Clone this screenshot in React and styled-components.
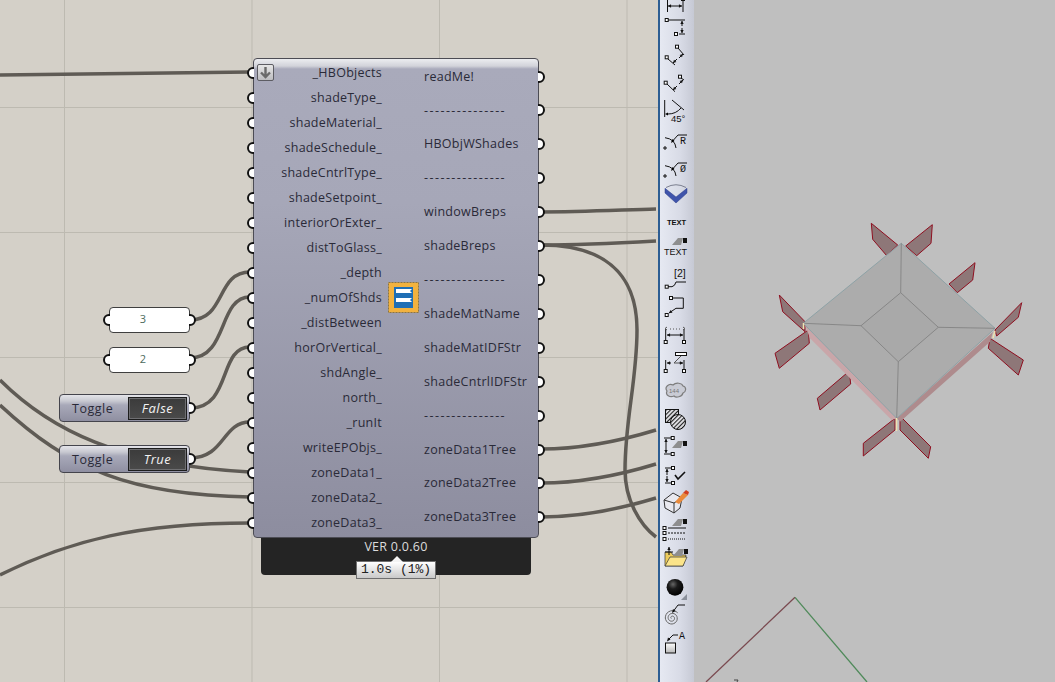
import React from 'react'
import styled, { createGlobalStyle } from 'styled-components'

const GlobalStyle = createGlobalStyle`
    html, body {
        margin: 0;
        padding: 0;
        overflow: hidden;
        background: #d4d0c8;
    }
`

const Page = styled.div`
    display: flex;
    width: 1055px;
    height: 682px;
    overflow: hidden;
    font-family: "Open Sans", "Liberation Sans", sans-serif;
`

const Canvas = styled.div`
    position: relative;
    flex: 0 0 658px;
    height: 100%;
    overflow: hidden;
    background-color: #d4d0c8;
    background-image:
        linear-gradient(to right, #bdbab1 1px, transparent 1px),
        linear-gradient(to bottom, #bdbab1 1px, transparent 1px);
    background-size: 187.5px 125px;
    background-position: 64px -18px;
`

const Wires = styled.svg`
    position: absolute;
    inset: 0;
    width: 658px;
    height: 682px;
`

const Wire = styled.path`
    fill: none;
    stroke: #5f5b55;
    stroke-width: 3.5;
`

const Node = styled.div`
    position: absolute;
    left: ${props => props.$x}px;
    top: ${props => props.$y}px;
    width: ${props => props.$w}px;
`

const Body = styled.div`
    position: relative;
    display: flex;
    box-sizing: border-box;
    height: 480px;
    border: 1px solid #4c4c54;
    border-radius: 4px;
    background: linear-gradient(to bottom, #ecedf0 0, #d2d3da 7px, #a9aabb 10px, #a6a7b8 30%, #8d8d9f 100%);
    z-index: 1;
`

const Inputs = styled.div`
    flex: 0 0 128px;
    padding-top: 1px;
`

const InputRow = styled.div`
    position: relative;
    height: 25px;
    line-height: 25px;
    font-size: 12.5px;
    letter-spacing: 0.27px;
    text-align: right;
    white-space: nowrap;
    color: #2a2a38;
`

const Outputs = styled.div`
    flex: 1;
    margin-left: 42px;
    padding-top: 0.6px;
`

const OutputRow = styled.div`
    position: relative;
    height: 33.92px;
    line-height: 33.92px;
    font-size: 12.5px;
    letter-spacing: ${props => props.$dash ? '1.45px' : '0.27px'};
    white-space: nowrap;
    color: #2a2a38;
`

// only the part of the round grip that sticks out of the node is drawn
const GripIn = styled.span`
    position: absolute;
    left: -7px;
    top: 50%;
    width: 7px;
    height: 12px;
    margin-top: -6px;
    overflow: hidden;

    &::before {
        content: '';
        position: absolute;
        left: 0;
        top: 0;
        box-sizing: border-box;
        width: 12px;
        height: 12px;
        background: #fff;
        border: 2.5px solid #111;
        border-radius: 50%;
    }
`

const GripOut = styled.span`
    position: absolute;
    left: 100%;
    top: 50%;
    width: 7px;
    height: 12px;
    margin-top: -6px;
    overflow: hidden;

    &::before {
        content: '';
        position: absolute;
        right: 0;
        top: 0;
        box-sizing: border-box;
        width: 12px;
        height: 12px;
        background: #fff;
        border: 2.5px solid #111;
        border-radius: 50%;
    }
`

const CheckBox = styled.div`
    position: absolute;
    left: 3px;
    top: 5px;
    display: flex;
    align-items: center;
    justify-content: center;
    box-sizing: border-box;
    width: 17px;
    height: 17px;
    border: 1px solid #5d5d63;
    border-radius: 2px;
    background: linear-gradient(to bottom, #e6e6e6, #bdbdc0);
`

const NodeIcon = styled.svg`
    position: absolute;
    left: 134px;
    top: 223px;
    width: 31px;
    height: 31px;
`

const Footer = styled.div`
    position: relative;
    height: 37px;
    margin: 0 8px;
    border-radius: 0 0 4px 4px;
    background: #242424;
    color: #dcdcdc;
    font-size: 12.5px;
    letter-spacing: 0.27px;
    line-height: 18px;
    text-align: center;
`

const Tip = styled.div`
    position: absolute;
    left: 95px;
    top: 23px;
    box-sizing: border-box;
    width: 80px;
    height: 18px;
    border: 1px solid #6f6f6f;
    background: linear-gradient(to bottom, #ffffff, #c9c9c9);
    color: #222;
    font-family: "Liberation Mono", monospace;
    font-size: 13px;
    letter-spacing: 0;
    line-height: 15px;
    text-align: center;
    white-space: pre;

    &::before {
        content: '';
        position: absolute;
        left: 34px;
        top: -6px;
        border-left: 6px solid transparent;
        border-right: 6px solid transparent;
        border-bottom: 6px solid #f4f4f4;
    }
`

const NumberPanel = styled.div`
    position: relative;
    box-sizing: border-box;
    height: 26px;
    border: 1px solid #3f3f3f;
    border-radius: 4px;
    background: #fff;
    color: #4d6b5c;
    font-size: 11px;
    line-height: 22px;
    text-align: center;
    padding-right: 13px;
`

const ToggleBox = styled.div`
    position: relative;
    display: flex;
    align-items: center;
    justify-content: space-between;
    box-sizing: border-box;
    height: 28px;
    padding: 0 2px 0 12px;
    border: 1px solid #44444c;
    border-radius: 4px;
    background: linear-gradient(to bottom, #e4e4e9 0, #c8c9d1 6px, #a8a9b9 10px, #8f8fa1 100%);
    color: #2a2a38;
    font-size: 12.5px;
    letter-spacing: 0.5px;
`

const ToggleValue = styled.div`
    box-sizing: border-box;
    width: 59px;
    height: 23px;
    border: 1px solid #1d1d1d;
    outline: 1px solid #6f6f72;
    outline-offset: -2px;
    background: linear-gradient(to bottom, #3b3b3b, #4a4a4a);
    color: #f2f2f2;
    font-size: 13px;
    font-style: italic;
    line-height: 20px;
    text-align: center;
`

const Toolbar = styled.div`
    flex: 0 0 36px;
    display: flex;
    flex-direction: column;
    box-sizing: border-box;
    height: 100%;
    overflow: hidden;
    padding: 0 0 0 2px;
    border-left: 2px solid #2c5d93;
    background: linear-gradient(to right, #e6e9f2, #d8dbe6 60%, #c6c9d4);
`

const ToolStack = styled.div`
    display: flex;
    flex-direction: column;
    margin-top: -15px;
`

const ToolSvg = styled.svg`
    flex: 0 0 28px;
    width: 28px;
    height: 28px;
    display: block;
`

const Viewport = styled.div`
    flex: 1;
    height: 100%;
    background: #bfbfbf;
`

const ViewSvg = styled.svg`
    display: block;
    width: 361px;
    height: 682px;
`

const inputs = ['_HBObjects', 'shadeType_', 'shadeMaterial_', 'shadeSchedule_', 'shadeCntrlType_', 'shadeSetpoint_', 'interiorOrExter_', 'distToGlass_', '_depth', '_numOfShds', '_distBetween', 'horOrVertical_', 'shdAngle_', 'north_', '_runIt', 'writeEPObjs_', 'zoneData1_', 'zoneData2_', 'zoneData3_']
const dashes = '---------------'
const outputs = ['readMe!', dashes, 'HBObjWShades', dashes, 'windowBreps', 'shadeBreps', dashes, 'shadeMatName', 'shadeMatIDFStr', 'shadeCntrlIDFStr', dashes, 'zoneData1Tree', 'zoneData2Tree', 'zoneData3Tree']

const wires = [
    'M0 75 C80 74 170 73 250 72',
    'M190 320 C226 320 216 272 250 272',
    'M190 358 C228 358 218 297 250 297',
    'M190 408 C232 408 218 347 250 347',
    'M190 458 C225 458 222 422 250 422',
    'M0 380 C50 430 120 465 250 472',
    'M0 405 C70 470 130 495 250 497',
    'M0 575 C70 540 140 523 250 523',
    'M541 212 C580 212 620 210 656 209',
    'M541 245 C580 245 620 243 656 241',
    'M541 245 C600 245 637 270 637 330 C637 380 625 420 625 470 C625 500 640 525 656 537',
    'M541 449 C580 449 620 441 656 430',
    'M541 483 C580 483 620 475 656 464',
    'M541 517 C580 517 620 509 656 498',
]

const Sq = ({ x, y }) => <rect x={x - 1.5} y={y - 1.5} width="3" height="3" fill="#fff" stroke="#111" strokeWidth="1" />

const Ln = ({ d, w = 1, c = '#111' }) => <path d={d} fill="none" stroke={c} strokeWidth={w} />

const Txt = ({ x, y, s = 8, w = 400, fam = 'Liberation Sans', children }) => (
    <text x={x} y={y} fontSize={s} fontWeight={w} fontFamily={`"${fam}", sans-serif`} fill="#111">{children}</text>
)

// head drawn at x2,y2
const Arr = ({ x1, y1, x2, y2 }) => {
    const a = Math.atan2(y2 - y1, x2 - x1)
    const p = (o) => `${x2 - 3.5 * Math.cos(a + o)} ${y2 - 3.5 * Math.sin(a + o)}`
    return (
        <>
            <Ln d={`M${x1} ${y1} L${x2} ${y2}`} />
            <path d={`M${x2} ${y2} L${p(0.5)} L${p(-0.5)} Z`} fill="#111" />
        </>
    )
}

const Hand = ({ x, y }) => (
    <>
        <polygon points={`${x} ${y + 7},${x + 6} ${y},${x + 11} ${y},${x + 9} ${y + 7}`} fill="#8e8e8e" />
        <rect x={x + 11} y={y} width="4" height="5" fill="#111" />
    </>
)

const spiral = Array.from({ length: 60 }, (_, i) => {
    const t = i / 59 * Math.PI * 5
    const r = 0.8 + t * 0.44
    return `${(10 + r * Math.cos(t + 2.4)).toFixed(1)} ${(17 + r * Math.sin(t + 2.4)).toFixed(1)}`
}).join(' L')

const tools = [
    <><Ln d="M5.5 15V27M21 15V27" /><Arr x1="8" y1="21" x2="6" y2="21" /><Arr x1="17" y1="21" x2="20" y2="21" /><Ln d="M8 21H17" /><Sq x={21} y={14} /></>,
    <><Sq x={4.7} y={7} /><Ln d="M6 7H23M17 21H23" /><Arr x1="20" y1="13" x2="20" y2="8" /><Arr x1="20" y1="15" x2="20" y2="20" /><Sq x={14} y={21} /></>,
    <><Sq x={15} y={5.7} /><Sq x={4.7} y={16.3} /><Ln d="M16 7L22 14M6 18L13 24" /><Arr x1="15" y1="18" x2="11" y2="22" /><Arr x1="17" y1="17" x2="21" y2="13" /></>,
    <><Sq x={18} y={7.7} /><Sq x={3.7} y={13.7} /><Ln d="M19 9L22 11M5 15L13 22.7" /><Arr x1="15" y1="17" x2="11" y2="21" /><Arr x1="17" y1="15" x2="21" y2="11" /></>,
    <><Ln d="M2.7 3V20M10 3L22 13" /><Ln d="M6 17Q14 17 19 11" /><path d="M3 17l3-1.5v3z" /><Txt x={9} y={25} s={9.5}>45°</Txt></>,
    <><Ln d="M3 12.7Q13 14 14 23M1 23H5M3 21V25" /><Ln d="M10 16.7L16 10H25" /><path d="M9 18l1.5-4 2 2z" /><Txt x={18} y={18.5} s={10} fam="Liberation Mono">R</Txt></>,
    <><Ln d="M3 12.7Q13 14 14 23M1 23H5M3 21V25" /><Ln d="M10 16.7L16 10H25" /><path d="M9 18l1.5-4 2 2z" /><Txt x={18} y={18.5} s={10} fam="Liberation Mono">Ø</Txt></>,
    <><polygon points="3,7.3 3,12 14,22 25,12 25,7.3 14,16" fill="#3f54ab" stroke="#2c3c86" strokeWidth=".5" /><Ln d="M4 6.5Q14 1 24 6.5" c="#7c8090" /></>,
    <Txt x={5} y={16} s={7.5} w={700}>TEXT</Txt>,
    <><Hand x={10} y={1} /><Txt x={2} y={18} s={9}>TEXT</Txt></>,
    <><Txt x={12} y={12} s={10.5}>[2]</Txt><Sq x={4.7} y={21.7} /><Ln d="M6 21.7H10Q13 21 14 17H24" /></>,
    <><Sq x={9} y={5} /><Ln d="M11 5H21.3V15.3H14" /><Arr x1="14" y1="15.3" x2="7" y2="20" /><Sq x={4.7} y={22} /></>,
    <><Sq x={3.7} y={21} /><Sq x={22} y={21} /><Ln d="M3.7 8V19M22 8V19" /><Arr x1="13" y1="14" x2="5" y2="14" /><Arr x1="13" y1="14" x2="21" y2="14" /><Ln d="M5 9L3 7.5L5 6M21 9L23 7.5L21 6" c="#555" /><path d="M8 8H18" stroke="#555" strokeDasharray="1 2" /></>,
    <><rect x="13.5" y="3.5" width="11" height="3" fill="#fff" stroke="#111" /><Sq x={3.7} y={22} /><Sq x={22} y={22} /><Ln d="M3.7 11V20M22 11V20" /><Arr x1="9" y1="14" x2="5" y2="14" /><Arr x1="17" y1="14" x2="21" y2="14" /><Ln d="M19 7L12 14H17" c="#555" /></>,
    <><path d="M5 14C2 10 7 6 11 8C14 5 20 6 21 9C25 10 24 15 21 16C20 20 14 21 12 19C8 21 3 18 5 14Z" fill="#c9cbd4" stroke="#7d7d7d" strokeWidth="1.2" /><text x="7" y="16" fontSize="6" fontFamily='"Liberation Sans", sans-serif' fill="#777">144</text></>,
    <><defs><pattern id="hatch" width="3" height="3" patternUnits="userSpaceOnUse" patternTransform="rotate(45)"><rect width="3" height="3" fill="#e4e4e8" /><rect width="1.1" height="3" fill="#222" /></pattern></defs><rect x="3.5" y="4.5" width="13" height="13" fill="url(#hatch)" stroke="#111" /><circle cx="16" cy="17" r="7.5" fill="url(#hatch)" stroke="#111" /></>,
    <><Sq x={10.7} y={5} /><Sq x={10.7} y={21} /><Ln d="M2 5H9M2 21H9" /><Arr x1="4" y1="13" x2="4" y2="6" /><Arr x1="4" y1="13" x2="4" y2="20" /><Hand x={10} y={8} /></>,
    <><Sq x={11} y={7} /><Sq x={11} y={22} /><Ln d="M3 7H9M3 22H9" /><Arr x1="5" y1="14" x2="5" y2="8" /><Arr x1="5" y1="15" x2="5" y2="21" /><Ln d="M13 14L16 18L23 11" w={1.6} /></>,
    <><polygon points="2,11 11,4 20,9 18,19 12,24 3,19" fill="#e9e9ef" stroke="#333" /><Ln d="M2 11L12 14L20 9M12 14V24" c="#333" /><polygon points="13,13 21,4 26,6 17,15" fill="#ea8a3a" /><polygon points="21,4 26,6 27,3 24,1" fill="#d2401f" /></>,
    <><Hand x={10} y={2} /><Sq x={2.5} y={11} /><Sq x={2.5} y={16} /><Sq x={2.5} y={22} /><Ln d="M6 11H24" /><path d="M6 16H24" stroke="#111" strokeDasharray="2 1" /><path d="M6 22H24" stroke="#111" strokeDasharray="1 1" /></>,
    <><polygon points="3,7 3,21 21,21 24,10 11,10 9,7" fill="#eccb5c" stroke="#333" strokeWidth=".7" /><polygon points="3,21 8,12 25,12 21,21" fill="#fbe48a" stroke="#333" strokeWidth=".7" /><Arr x1="7" y1="10" x2="7" y2="2" /><Ln d="M3 7H11" /><Hand x={11} y={4} /></>,
    <><defs><radialGradient id="ball" cx="38%" cy="32%" r="70%"><stop offset="0" stopColor="#666" /><stop offset=".4" stopColor="#1b1b1b" /><stop offset="1" stopColor="#000" /></radialGradient></defs><circle cx="13" cy="14.3" r="8.4" fill="url(#ball)" /><polygon points="25,21 25,27 19,27" fill="#8a8f9a" /></>,
    <><path d={`M${spiral}`} fill="none" stroke="#666" strokeWidth="1" /><Ln d="M23 4H16L11 10.7" /><path d="M10 12l1-4 2.5 2z" fill="#111" /></>,
    <><defs><linearGradient id="sq" x1="0" y1="0" x2="0" y2="1"><stop offset="0" stopColor="#fff" /><stop offset="1" stopColor="#b8b8b8" /></linearGradient></defs><rect x="3.5" y="14" width="10" height="10" fill="url(#sq)" stroke="#111" /><Ln d="M16 6H11L6 11" /><path d="M5 12.5l1-4 2.5 2z" fill="#111" /><Txt x={17} y={10} s={10} fam="Liberation Mono">A</Txt></>,
]

const shades = [
    '871.3,223.3 872.7,239.3 886.7,255.7 897.7,245',
    '932.3,224.7 931,243.3 916.7,255.7 905.7,246',
    '975,262.7 972.7,280 957.3,292.7 949,284',
    '1021.7,302.7 1018.3,317.3 996.7,336 995,330',
    '990,338.3 1023.3,360 1018.3,375 988.3,348.3',
    '900,416 930.7,446.7 928.3,458.3 900,430',
    '895,418.3 863.3,443.3 863.3,456 895,430',
    '849.3,371 817.3,398.3 820,410 850.7,384',
    '779.3,295 782.7,311.7 805,331.7 805,321.7',
    '808.3,330 809.3,343.3 779.3,368.3 775,353.3',
]

export default function App() {
    return (
        <Page>
            <GlobalStyle />
            <Canvas>
                <Wires viewBox="0 0 658 682">
                    {wires.map((d, i) => <Wire key={i} d={d} />)}
                </Wires>

                <Node $x={109} $y={307} $w={81}>
                    <NumberPanel>3<GripIn /><GripOut /></NumberPanel>
                </Node>
                <Node $x={109} $y={347} $w={81}>
                    <NumberPanel>2<GripIn /><GripOut /></NumberPanel>
                </Node>
                <Node $x={59} $y={394} $w={131}>
                    <ToggleBox>Toggle<ToggleValue>False</ToggleValue><GripOut /></ToggleBox>
                </Node>
                <Node $x={59} $y={445} $w={131}>
                    <ToggleBox>Toggle<ToggleValue>True</ToggleValue><GripOut /></ToggleBox>
                </Node>

                <Node $x={253} $y={58} $w={286}>
                    <Body>
                        <CheckBox>
                            <svg width="13" height="13" viewBox="0 0 13 13">
                                <path d="M6.5 1V11M2 6.5L6.5 11L11 6.5" fill="none" stroke="#6a6a6a" strokeWidth="2.4" />
                            </svg>
                        </CheckBox>
                        <Inputs>
                            {inputs.map((name) => (
                                <InputRow key={name}><GripIn />{name}</InputRow>
                            ))}
                        </Inputs>
                        <NodeIcon viewBox="0 0 31 31">
                            <rect x="0.5" y="0.5" width="30" height="30" fill="#f2b23e" stroke="#8d7440" strokeDasharray="2 1" />
                            <rect x="6" y="5" width="19" height="21" fill="#1f6fb5" />
                            <polygon points="8,7 24,7 22,9 24,11 8,11" fill="#fff" />
                            <polygon points="8,16 24,16 22,18 24,20 8,20" fill="#fff" />
                        </NodeIcon>
                        <Outputs>
                            {outputs.map((name, i) => (
                                <OutputRow key={i} $dash={name === dashes}>{name}<GripOut /></OutputRow>
                            ))}
                        </Outputs>
                    </Body>
                    <Footer>
                        VER 0.0.60
                        <Tip>1.0s (1%)</Tip>
                    </Footer>
                </Node>
            </Canvas>

            <Toolbar>
                <ToolStack>
                    {tools.map((icon, i) => (
                        <ToolSvg key={i} viewBox="0 0 28 28">{icon}</ToolSvg>
                    ))}
                </ToolStack>
            </Toolbar>

            <Viewport>
                <ViewSvg viewBox="694 0 361 682">
                    {shades.map((points) => (
                        <polygon key={points} points={points} fill="#8e7778" stroke="#8f0f20" strokeWidth="1" />
                    ))}
                    <polygon points="810,338.3 891.7,420 896.7,418.3 805,325" fill="#c9a6a9" />
                    <polygon points="900,421.7 990,341.7 993,331.7 896.7,418.3" fill="#ae8b8d" />
                    <polygon points="901.3,243.3 995,328.3 896.7,418.3 803.3,323.3" fill="#acacac" stroke="#8ea2a6" strokeWidth="1" />
                    <polygon points="900.7,292.7 938.3,327.3 898.3,361.7 861,325.7" fill="#a9a9a9" stroke="#7d7d7d" strokeWidth=".8" />
                    <path d="M901.3 243.3L900.7 292.7M995 328.3L938.3 327.3M896.7 418.3L898.3 361.7M803.3 323.3L861 325.7" stroke="#7d7d7d" strokeWidth=".8" fill="none" />
                    <path d="M803.5 323V329M896.5 418V431M995 331L993 338" stroke="#f0e2b0" strokeWidth="1.5" fill="none" />
                    <path d="M795 597.3L706 682" stroke="#7a4a50" strokeWidth="1.3" fill="none" />
                    <path d="M795 597.3L867 682" stroke="#4f8a5a" strokeWidth="1.3" fill="none" />
                    <path d="M734 680H738L737 682" stroke="#444" strokeWidth="1" fill="none" />
                </ViewSvg>
            </Viewport>
        </Page>
    )
}
